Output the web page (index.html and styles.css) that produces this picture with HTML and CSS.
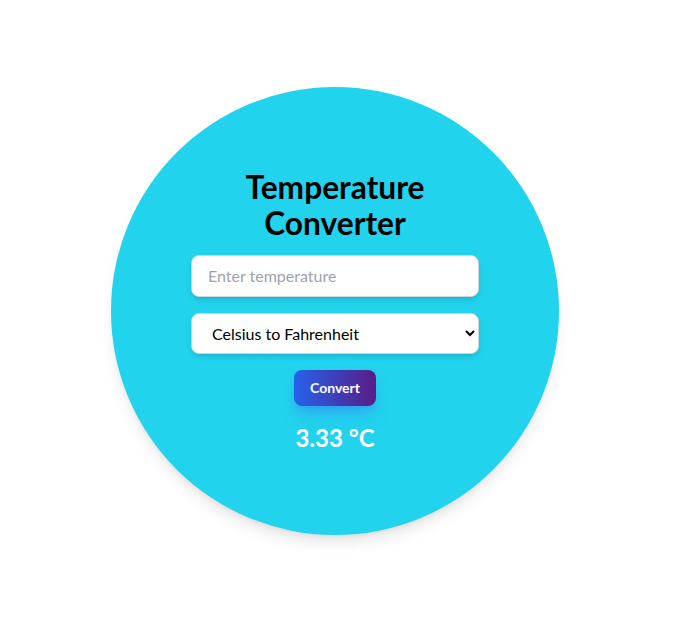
FILE: index.html
```html
<!DOCTYPE html>
<html lang="en">
<head>
<meta charset="utf-8">
<title>Temperature Converter</title>
<link rel="stylesheet" href="styles.css">
</head>
<body>
<main class="page">
  <section class="circle">
    <h1 class="title">Temperature<br>Converter</h1>
    <input class="field" type="text" placeholder="Enter temperature">
    <select class="field select">
      <option>Celsius to Fahrenheit</option>
      <option>Fahrenheit to Celsius</option>
    </select>
    <button class="btn" type="button">Convert</button>
    <p class="result">3.33 °C</p>
  </section>
</main>
</body>
</html>
```

FILE: styles.css
```css
* { box-sizing: border-box; }
html, body { margin: 0; padding: 0; background: #fff; }
body { font-family: "Lato", "Noto Sans", sans-serif; }
.page {
  min-height: 627px;
  display: flex;
  align-items: center;
  justify-content: center;
  padding: 0 12px 5px 0;
}
.circle {
  width: 448px;
  height: 448px;
  border-radius: 50%;
  background: #22d3ee;
  display: flex;
  flex-direction: column;
  align-items: center;
  justify-content: center;
  box-shadow: 0 10px 15px -3px rgba(0,0,0,0.1), 0 4px 6px -4px rgba(0,0,0,0.1);
}
.title {
  margin: 0 0 14px;
  font-size: 31.7px;
  line-height: 36px;
  font-weight: 700;
  text-align: center;
  color: #000;
}
.field {
  width: 288px;
  height: 42px;
  border: 1px solid #d1d5db;
  border-radius: 8px;
  background: #fff;
  padding: 0 16px;
  font-family: inherit;
  font-size: 16px;
  color: #000;
  box-shadow: 0 4px 6px -1px rgba(0,0,0,0.1), 0 2px 4px -2px rgba(0,0,0,0.1);
  outline: none;
}
.field::placeholder { color: #9ca3af; }
.select { margin-top: 16px; height: 41px; }
.btn {
  margin-top: 16px;
  width: 82px;
  height: 36px;
  border: none;
  border-radius: 8px;
  background: linear-gradient(to right, #2563eb, #581c87);
  color: #fff;
  font-family: inherit;
  font-size: 14px;
  font-weight: 700;
  box-shadow: 0 10px 15px -3px rgba(59,130,246,0.5), 0 4px 6px -4px rgba(59,130,246,0.5);
}
.result {
  margin: 16px 0 0;
  font-size: 24px;
  line-height: 32px;
  font-weight: 700;
  color: #fff;
}
```
